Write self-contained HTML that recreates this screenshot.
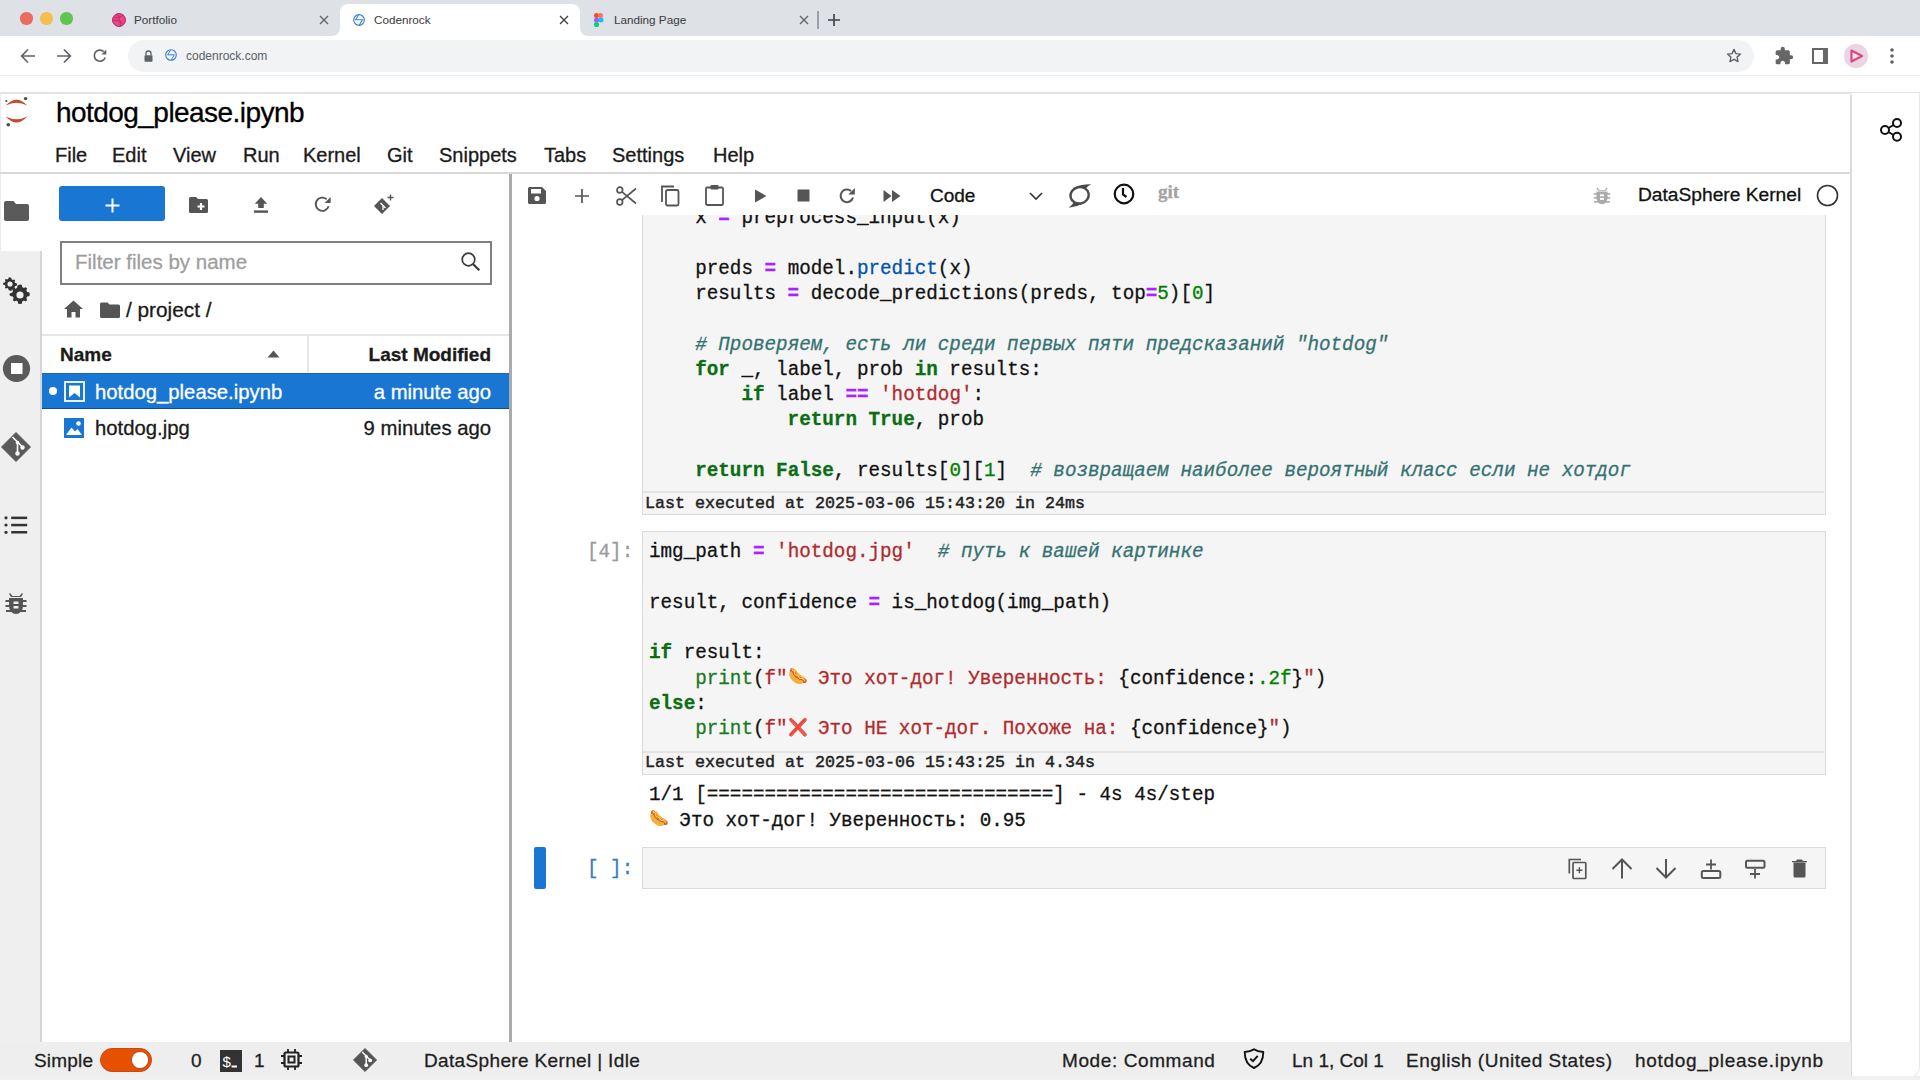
<!DOCTYPE html>
<html><head><meta charset="utf-8">
<style>
*{box-sizing:border-box;margin:0;padding:0}
html,body{width:1920px;height:1080px;overflow:hidden;background:#fff;font-family:"Liberation Sans",sans-serif;color:#000;-webkit-text-stroke:0.3px currentColor}
.a{position:absolute}
svg{position:absolute;overflow:visible}
.tabtxt{top:13px;font-size:11.7px;line-height:14px;color:#3c4043;white-space:nowrap;-webkit-text-stroke:0.05px currentColor}
.menu{top:144px;font-size:20px;line-height:23px;color:#1a1a1a;white-space:nowrap}
.st{top:1048.7px;font-size:19px;line-height:23px;color:#1e1e1e;white-space:nowrap}
.code{font-family:"Liberation Mono",monospace;font-size:20.5px;white-space:pre;color:#111;line-height:25.25px;transform:scaleX(0.939);transform-origin:0 0;-webkit-text-stroke:0.3px currentColor}
.exe{font-family:"Liberation Mono",monospace;font-size:17.4px;white-space:pre;color:#222;line-height:20px;transform:scaleX(0.958);transform-origin:0 0;-webkit-text-stroke:0.45px currentColor}
.k{color:#0b6e12;font-weight:bold}
.o{color:#aa22ff;font-weight:bold}
.s{color:#b02a2e}
.c{color:#357272;font-style:italic}
.n{color:#008000}
.b{color:#1a7a22}
.p{color:#0055aa}
.emo{display:inline-block;width:20px;font-size:17px;line-height:20px;text-align:left;overflow:visible;position:relative;top:-1.5px;-webkit-text-stroke:0}
</style></head><body>
<!-- ============ BROWSER CHROME ============ -->
<div class="a" style="left:0;top:0;width:1920px;height:36px;background:#dee1e6"></div>
<div class="a" style="left:20px;top:12px;width:12.5px;height:12.5px;border-radius:50%;background:#ed6a5e"></div>
<div class="a" style="left:40px;top:12px;width:12.5px;height:12.5px;border-radius:50%;background:#f4bf4f"></div>
<div class="a" style="left:60px;top:12px;width:12.5px;height:12.5px;border-radius:50%;background:#61c554"></div>
<!-- active tab -->
<div class="a" style="left:340px;top:4px;width:240px;height:32px;background:#fff;border-radius:8px 8px 0 0"></div>
<div class="a" style="left:332px;top:28px;width:8px;height:8px;background:#fff"></div>
<div class="a" style="left:324px;top:20px;width:16px;height:16px;background:#dee1e6;border-radius:0 0 8px 0"></div>
<div class="a" style="left:580px;top:28px;width:8px;height:8px;background:#fff"></div>
<div class="a" style="left:580px;top:20px;width:16px;height:16px;background:#dee1e6;border-radius:0 0 0 8px"></div>
<!-- tab 1 favicon (dribbble) -->
<svg style="left:112px;top:13px" width="14" height="14" viewBox="0 0 14 14"><circle cx="7" cy="7" r="6.5" fill="#e64683" stroke="#b8296a" stroke-width="1"/><path d="M2 4.5c3 0.5 7-0.5 9.5-2.5M1 8c3-1.5 7-1 10 3M5 1c2 3 3.5 7 3.5 12" stroke="#c32361" stroke-width="0.8" fill="none"/></svg>
<div class="a tabtxt" style="left:134px">Portfolio</div>
<svg style="left:319px;top:15px" width="10" height="10" viewBox="0 0 10 10"><path d="M1 1L9 9M9 1L1 9" stroke="#5f6368" stroke-width="1.3"/></svg>
<!-- tab 2 favicon -->
<svg style="left:353px;top:14px" width="12" height="12" viewBox="0 0 12 12"><circle cx="6" cy="6" r="5.3" stroke="#3b82d6" stroke-width="1.2" fill="none"/><path d="M5.7 0.8L2.6 5.8H9.4L6.1 11.2" stroke="#3b82d6" stroke-width="1.1" fill="none"/></svg>
<div class="a tabtxt" style="left:374px">Codenrock</div>
<svg style="left:559px;top:15px" width="10" height="10" viewBox="0 0 10 10"><path d="M1 1L9 9M9 1L1 9" stroke="#3c4043" stroke-width="1.3"/></svg>
<!-- tab 3 favicon figma -->
<svg style="left:594px;top:13px" width="10" height="15" viewBox="0 0 10 15"><rect x="0" y="0" width="5" height="5" rx="2.5" fill="#f24e1e"/><rect x="4" y="0" width="5" height="5" rx="2.5" fill="#ff7262"/><rect x="0" y="4.5" width="5" height="5" rx="2.5" fill="#a259ff"/><circle cx="7" cy="7" r="2.5" fill="#1abcfe"/><circle cx="2.5" cy="11.5" r="2.6" fill="#0acf83"/></svg>
<div class="a tabtxt" style="left:614px">Landing Page</div>
<svg style="left:799px;top:15px" width="10" height="10" viewBox="0 0 10 10"><path d="M1 1L9 9M9 1L1 9" stroke="#5f6368" stroke-width="1.3"/></svg>
<div class="a" style="left:817px;top:11px;width:1.5px;height:18px;background:#9aa0a6"></div>
<svg style="left:827px;top:13px" width="14" height="14" viewBox="0 0 14 14"><path d="M7 1V13M1 7H13" stroke="#3c4043" stroke-width="1.6"/></svg>

<!-- toolbar row -->
<div class="a" style="left:0;top:75px;width:1920px;height:1px;background:#ececec"></div>
<svg style="left:20px;top:48px" width="16" height="16" viewBox="0 0 16 16"><path d="M15 8H2M8 1.5L1.6 8L8 14.5" stroke="#5f6368" stroke-width="1.7" fill="none"/></svg>
<svg style="left:56px;top:48px" width="16" height="16" viewBox="0 0 16 16"><path d="M1 8H14M8 1.5L14.4 8L8 14.5" stroke="#5f6368" stroke-width="1.7" fill="none"/></svg>
<svg style="left:92px;top:48px" width="16" height="16" viewBox="0 0 16 16"><path d="M13.2 9.5A5.6 5.6 0 1 1 11.8 3.6" stroke="#5f6368" stroke-width="1.7" fill="none"/><path d="M14.3 1.5V6.4H9.4Z" fill="#5f6368"/></svg>
<div class="a" style="left:128px;top:40px;width:1626px;height:32px;border-radius:16px;background:#f1f3f4"></div>
<svg style="left:144px;top:50px" width="9" height="12" viewBox="0 0 9 12"><path d="M2 5.5V3.5A2.5 2.5 0 0 1 7 3.5V5.5" stroke="#5f6368" stroke-width="1.3" fill="none"/><rect x="0.5" y="5.2" width="8" height="6.5" rx="0.8" fill="#5f6368"/></svg>
<svg style="left:165px;top:49px" width="12" height="12" viewBox="0 0 12 12"><circle cx="6" cy="6" r="5.3" stroke="#3b82d6" stroke-width="1.1" fill="none"/><path d="M5.7 0.8L2.6 5.8H9.4L6.1 11.2" stroke="#3b82d6" stroke-width="1" fill="none"/></svg>
<div class="a" style="left:186px;top:49px;font-size:12px;line-height:14px;color:#5f6368;-webkit-text-stroke:0.05px currentColor">codenrock.com</div>
<svg style="left:1725px;top:47px" width="18" height="18" viewBox="0 0 24 24"><path d="M12 3.2l2.6 5.6 6.1.6-4.6 4.1 1.3 6-5.4-3.1-5.4 3.1 1.3-6-4.6-4.1 6.1-.6z" stroke="#5f6368" stroke-width="1.8" fill="none" stroke-linejoin="round"/></svg>
<svg style="left:1774px;top:46px" width="20" height="20" viewBox="0 0 24 24"><path d="M20.5 11H19V7c0-1.1-.9-2-2-2h-4V3.5a2.5 2.5 0 0 0-5 0V5H4c-1.1 0-2 .9-2 2v3.8h1.5c1.5 0 2.7 1.2 2.7 2.7S5 16.2 3.5 16.2H2V20c0 1.1.9 2 2 2h3.8v-1.5c0-1.5 1.2-2.7 2.7-2.7s2.7 1.2 2.7 2.7V22H17c1.1 0 2-.9 2-2v-4h1.5a2.5 2.5 0 0 0 0-5z" fill="#666"/></svg>
<svg style="left:1812px;top:48px" width="16" height="16" viewBox="0 0 16 16"><rect x="1" y="1" width="14" height="14" stroke="#666" stroke-width="2" fill="none"/><rect x="11" y="1" width="4" height="14" fill="#666"/></svg>
<div class="a" style="left:1844px;top:44px;width:24px;height:24px;border-radius:50%;background:#ead3e2"></div>
<svg style="left:1848px;top:48px" width="16" height="16" viewBox="0 0 16 16"><path d="M3.5 2.5L14 8L3.5 13.5Z" fill="#f6e6f0" stroke="#d9487e" stroke-width="2.2" stroke-linejoin="round"/></svg>
<svg style="left:1889px;top:47px" width="6" height="18" viewBox="0 0 6 18"><circle cx="3" cy="3" r="1.8" fill="#5f6368"/><circle cx="3" cy="9" r="1.8" fill="#5f6368"/><circle cx="3" cy="15" r="1.8" fill="#5f6368"/></svg>

<!-- ============ JUPYTER ============ -->
<div class="a" style="left:0;top:92px;width:1920px;height:1.5px;background:#e3e3e3"></div>
<div class="a" style="left:0;top:93px;width:1px;height:987px;background:#ececec"></div>
<!-- logo -->
<svg style="left:0;top:93px" width="32" height="36" viewBox="0 0 32 36"><path d="M5.8 12.5Q16.5 1.2 27.2 12.5Q16.5 7.2 5.8 12.5Z" fill="#c9472c"/><path d="M5.8 23.5Q16.5 35.5 27.2 23.5Q16.5 29.2 5.8 23.5Z" fill="#c9472c"/><circle cx="25.6" cy="5.6" r="1.7" fill="#4a4a4a"/><circle cx="6.3" cy="8" r="1.1" fill="#4a4a4a"/><circle cx="8.3" cy="31.8" r="1.8" fill="#4a4a4a"/></svg>
<div class="a" style="left:56px;top:96.8px;font-size:28px;line-height:32px;letter-spacing:-0.55px;color:#000;white-space:nowrap">hotdog_please.ipynb</div>
<div class="a menu" style="left:55px">File</div>
<div class="a menu" style="left:112px">Edit</div>
<div class="a menu" style="left:173px">View</div>
<div class="a menu" style="left:243px">Run</div>
<div class="a menu" style="left:303px">Kernel</div>
<div class="a menu" style="left:387px">Git</div>
<div class="a menu" style="left:439px">Snippets</div>
<div class="a menu" style="left:544px">Tabs</div>
<div class="a menu" style="left:612px">Settings</div>
<div class="a menu" style="left:713px">Help</div>
<div class="a" style="left:0;top:172px;width:1852px;height:2px;background:#d9d9d9"></div>

<!-- right sidebar -->
<div class="a" style="left:1852px;top:93px;width:68px;height:984.5px;background:#fff;border-bottom-right-radius:11px;border-right:1px solid #e9e9e9;border-bottom:1px solid #e9e9e9"></div>
<div class="a" style="left:1850px;top:95px;width:2px;height:985px;background:#dcdcdc"></div>
<svg style="left:1879px;top:117px" width="24" height="26" viewBox="0 0 24 26"><circle cx="6" cy="13" r="4" stroke="#111" stroke-width="2" fill="none"/><circle cx="18" cy="6" r="4" stroke="#111" stroke-width="2" fill="none"/><circle cx="18" cy="19.7" r="4" stroke="#111" stroke-width="2" fill="none"/><path d="M9.5 11L14.5 8M9.5 15L14.5 18" stroke="#111" stroke-width="2"/></svg>

<!-- left strip -->
<div class="a" style="left:0;top:251px;width:41px;height:791px;background:#efefef"></div>
<div class="a" style="left:39.5px;top:251px;width:2px;height:791px;background:#d5d5d5"></div>

<svg style="left:4px;top:201px" width="25" height="20" viewBox="0 0 25 20"><path d="M2 0H9.5L12 3H23A2 2 0 0 1 25 5V18A2 2 0 0 1 23 20H2A2 2 0 0 1 0 18V2A2 2 0 0 1 2 0Z" fill="#5a5a5a"/></svg>
<svg style="left:3px;top:276px" width="27" height="27" viewBox="0 0 27 27">
<g fill="#333"><path d="M7 1.5l1.3.3.3 1.5 1.2.7 1.4-.6.9.9-.6 1.4.7 1.2 1.5.3.3 1.3-.3 1.3-1.5.3-.7 1.2.6 1.4-.9.9-1.4-.6-1.2.7-.3 1.5L7 14.5l-1.3-.3-.3-1.5-1.2-.7-1.4.6-.9-.9.6-1.4-.7-1.2-1.5-.3L0 8l.3-1.3 1.5-.3.7-1.2-.6-1.4.9-.9 1.4.6 1.2-.7.3-1.5z"/><path d="M17 8.5l1.8.4.4 2.1 1.6 1 2-.8 1.3 1.3-.8 2 1 1.6 2.1.4.4 1.8-.4 1.8-2.1.4-1 1.6.8 2-1.3 1.3-2-.8-1.6 1-.4 2.1-1.8.4-1.8-.4-.4-2.1-1.6-1-2 .8-1.3-1.3.8-2-1-1.6-2.1-.4L6.5 19l.4-1.8 2.1-.4 1-1.6-.8-2 1.3-1.3 2 .8 1.6-1 .4-2.1z"/></g>
<circle cx="7" cy="8" r="2.6" fill="#eee"/><circle cx="17" cy="19" r="3.6" fill="#eee"/></svg>
<svg style="left:2px;top:354px" width="29" height="29" viewBox="0 0 29 29"><circle cx="14.5" cy="14.5" r="13.6" fill="#5a5a5a"/><rect x="9" y="9" width="11.5" height="11" fill="#fff"/></svg>
<svg style="left:1px;top:432px" width="30" height="30" viewBox="0 0 30 30"><path d="M15 0.5L29.5 15L15 29.5L0.5 15Z" fill="#5a5a5a" stroke="#5a5a5a" stroke-width="1" stroke-linejoin="round"/><path d="M11.5 5L16.5 10V21M16.5 10L21.5 15" stroke="#fff" stroke-width="1.6" fill="none"/><circle cx="16.5" cy="21.5" r="2.2" fill="#fff"/><circle cx="21.5" cy="15.5" r="2.2" fill="#fff"/><circle cx="16.5" cy="10.5" r="1.8" fill="#fff"/></svg>
<svg style="left:4px;top:515px" width="24" height="20" viewBox="0 0 24 20"><g fill="#333"><circle cx="2" cy="2.8" r="1.6"/><circle cx="2" cy="10" r="1.6"/><circle cx="2" cy="17.3" r="1.6"/><rect x="7.2" y="1.6" width="16" height="2.5"/><rect x="7.2" y="8.8" width="16" height="2.5"/><rect x="7.2" y="16" width="16" height="2.5"/></g></svg>
<svg style="left:5px;top:591px" width="22" height="24" viewBox="0 0 22 24"><g fill="#555"><path d="M5 2L7.5 5H14.5L17 2L18 3L16 6H6L4 3Z"/><rect x="0.5" y="9" width="21" height="2"/><rect x="0.5" y="14" width="21" height="2"/><rect x="1" y="19" width="20" height="2"/><path d="M4 7H18V15A7 8 0 0 1 4 15Z"/></g><rect x="8.5" y="10.5" width="5" height="2.5" fill="#eee"/><rect x="8.5" y="15" width="5" height="2.5" fill="#eee"/></svg>


<!-- file browser -->
<div class="a" style="left:509.3px;top:174px;width:2.4px;height:868px;background:#ababab"></div>

<div class="a" style="left:59px;top:186px;width:106px;height:35px;background:#1976d2;border-radius:3px"></div>
<svg style="left:105px;top:198px" width="15" height="15" viewBox="0 0 15 15"><path d="M7.5 0.5V14.5M0.5 7.5H14.5" stroke="#fff" stroke-width="2"/></svg>
<svg style="left:189px;top:196.5px" width="19" height="16" viewBox="0 0 19 16"><path d="M1.5 0H7L9 2H17.5A1.5 1.5 0 0 1 19 3.5V14.5A1.5 1.5 0 0 1 17.5 16H1.5A1.5 1.5 0 0 1 0 14.5V1.5A1.5 1.5 0 0 1 1.5 0Z" fill="#555"/><path d="M12 6V13M8.5 9.5H15.5" stroke="#fff" stroke-width="2.2"/></svg>
<svg style="left:254px;top:196.5px" width="14" height="16" viewBox="0 0 14 16"><path d="M7 0L13.2 6.8H9.8V11H4.2V6.8H0.8Z" fill="#555"/><rect x="0" y="13.4" width="14" height="2.4" fill="#555"/></svg>
<svg style="left:313px;top:195px" width="19" height="19" viewBox="0 0 19 19"><path d="M15.6 11.2A6.6 6.6 0 1 1 13.6 4.2" stroke="#555" stroke-width="1.9" fill="none"/><path d="M17.6 2V8H11.6Z" fill="#555"/></svg>
<svg style="left:373px;top:194px" width="22" height="22" viewBox="0 0 22 22"><path d="M9 4L17 12L9 20L1 12Z" fill="#555"/><path d="M7.5 9L10 11.5V16M10 11.5L12.5 14" stroke="#fff" stroke-width="1.3" fill="none"/><path d="M17.5 0.5V6.5M14.5 3.5H20.5" stroke="#555" stroke-width="1.4"/></svg>
<div class="a" style="left:59.5px;top:240.5px;width:432px;height:44px;border:2px solid #7f7f7f;background:#fff"></div>
<div class="a" style="left:75px;top:250px;font-size:20.5px;line-height:24px;color:#9e9e9e;white-space:nowrap">Filter files by name</div>
<svg style="left:460px;top:251px" width="22" height="22" viewBox="0 0 22 22"><circle cx="8.5" cy="8.5" r="6.3" stroke="#3a3a3a" stroke-width="1.7" fill="none"/><path d="M13.2 13.2L19.3 19.3" stroke="#3a3a3a" stroke-width="2.3"/></svg>
<svg style="left:64px;top:300px" width="19" height="18" viewBox="0 0 19 18"><path d="M9.5 0.5L19 9H16V17.5H11.5V12H7.5V17.5H3V9H0Z" fill="#555"/></svg>
<svg style="left:100px;top:302px" width="20" height="16" viewBox="0 0 20 16"><path d="M1.5 0.5H7.5L9.5 2.5H18.5A1.5 1.5 0 0 1 20 4V14.5A1.5 1.5 0 0 1 18.5 16H1.5A1.5 1.5 0 0 1 0 14.5V2A1.5 1.5 0 0 1 1.5 0.5Z" fill="#555"/></svg>
<div class="a" style="left:126px;top:298px;font-size:20.8px;line-height:23px;color:#1a1a1a;white-space:nowrap">/ project /</div>
<div class="a" style="left:42px;top:334px;width:467px;height:1.5px;background:#e6e6e6"></div>
<div class="a" style="left:307px;top:336px;width:1.5px;height:36px;background:#e6e6e6"></div>
<div class="a" style="left:60px;top:344px;font-size:19px;line-height:22px;font-weight:bold;color:#1a1a1a;white-space:nowrap">Name</div>
<svg style="left:267px;top:350px" width="13" height="8" viewBox="0 0 13 8"><path d="M6.5 0.5L12.5 7.5H0.5Z" fill="#555"/></svg>
<div class="a" style="left:300px;top:344px;width:191px;text-align:right;font-size:19px;line-height:22px;font-weight:bold;color:#1a1a1a;white-space:nowrap">Last Modified</div>
<div class="a" style="left:42px;top:372.5px;width:467px;height:36.5px;background:#1976d2;border-top:1px solid #1b66b8;border-bottom:1.5px solid #0e4f93"></div>
<div class="a" style="left:49px;top:387px;width:8px;height:8px;border-radius:50%;background:#fff"></div>
<svg style="left:64px;top:381px" width="21" height="21" viewBox="0 0 21 21"><rect x="1" y="1" width="19" height="19" stroke="#fff" stroke-width="1.8" fill="none"/><path d="M5 4.5H16V16.5L10.5 12L5 16.5Z" fill="#fff"/></svg>
<div class="a" style="left:95px;top:381px;font-size:20.3px;line-height:23px;color:#fff;white-space:nowrap">hotdog_please.ipynb</div>
<div class="a" style="left:300px;top:381px;width:191px;text-align:right;font-size:20.3px;line-height:23px;color:#fff;white-space:nowrap">a minute ago</div>
<svg style="left:64px;top:418px" width="20" height="20" viewBox="0 0 20 20"><rect x="0" y="0" width="20" height="20" fill="#1976d2"/><path d="M2 17L7.5 9.5L11 13.5L13.5 11L18 17Z" fill="#fff"/><circle cx="14.5" cy="5.5" r="2.3" fill="#fff"/></svg>
<div class="a" style="left:95px;top:417px;font-size:20.3px;line-height:23px;color:#1a1a1a;white-space:nowrap">hotdog.jpg</div>
<div class="a" style="left:300px;top:417px;width:191px;text-align:right;font-size:20.3px;line-height:23px;color:#1a1a1a;white-space:nowrap">9 minutes ago</div>


<!-- notebook -->

<!-- toolbar icons -->
<svg style="left:528px;top:187px" width="18" height="17" viewBox="0 0 18 17"><path d="M1.5 0H14L18 4V15.5A1.5 1.5 0 0 1 16.5 17H1.5A1.5 1.5 0 0 1 0 15.5V1.5A1.5 1.5 0 0 1 1.5 0Z" fill="#555"/><rect x="3" y="2" width="10" height="4.5" fill="#fff"/><circle cx="9" cy="11.5" r="2.6" fill="#fff"/></svg>
<svg style="left:575px;top:189px" width="14" height="14" viewBox="0 0 14 14"><path d="M7 0V14M0 7H14" stroke="#555" stroke-width="1.7"/></svg>
<svg style="left:616px;top:186px" width="21" height="20" viewBox="0 0 21 20"><circle cx="3.8" cy="4" r="2.8" stroke="#555" stroke-width="1.7" fill="none"/><circle cx="3.8" cy="16" r="2.8" stroke="#555" stroke-width="1.7" fill="none"/><path d="M6 5.8L20 17.5M6 14.2L20 2.5" stroke="#555" stroke-width="1.7"/></svg>
<svg style="left:661px;top:185px" width="19" height="22" viewBox="0 0 19 22"><path d="M1 17V1.5H13" stroke="#555" stroke-width="1.8" fill="none"/><rect x="5" y="5" width="12.5" height="15.5" rx="1.5" stroke="#555" stroke-width="1.8" fill="none"/></svg>
<svg style="left:705px;top:184px" width="19" height="22" viewBox="0 0 19 22"><rect x="1" y="3.5" width="17" height="17.5" rx="1.2" stroke="#555" stroke-width="1.8" fill="none"/><rect x="5.5" y="1" width="8" height="4.5" rx="1" fill="#555"/></svg>
<svg style="left:754px;top:189px" width="13" height="14" viewBox="0 0 13 14"><path d="M1 0.5L12.5 7L1 13.5Z" fill="#555"/></svg>
<svg style="left:797px;top:189px" width="13" height="13" viewBox="0 0 13 13"><rect x="0.5" y="0.5" width="12" height="12" fill="#555"/></svg>
<svg style="left:838px;top:187px" width="18" height="18" viewBox="0 0 18 18"><path d="M15 10.5A6.3 6.3 0 1 1 13 4" stroke="#555" stroke-width="2" fill="none"/><path d="M16.8 1V7.5H10.3Z" fill="#555"/></svg>
<svg style="left:883px;top:189px" width="18" height="14" viewBox="0 0 18 14"><path d="M0.5 1L8.5 7L0.5 13ZM9 1L17.5 7L9 13Z" fill="#555"/></svg>
<div class="a" style="left:930px;top:185px;font-size:19px;line-height:22px;color:#111;white-space:nowrap">Code</div>
<svg style="left:1029px;top:192px" width="14" height="9" viewBox="0 0 14 9"><path d="M1 1L7 7L13 1" stroke="#333" stroke-width="1.6" fill="none"/></svg>
<svg style="left:1066px;top:182px" width="28" height="28" viewBox="0 0 28 28"><ellipse cx="13.6" cy="13.3" rx="9.2" ry="8.2" transform="rotate(-12 13.6 13.3)" stroke="#4a4a4a" stroke-width="2.4" fill="none"/><path d="M9 5.6Q16 2 25 2.3Q21 4.5 19.5 6.8Q15 4.6 9 5.6Z" fill="#4a4a4a"/><path d="M18.5 21Q11 25 2.6 25.8Q6 23.5 7.5 20.5Q12 22.5 18.5 21Z" fill="#4a4a4a"/></svg>
<svg style="left:1113px;top:183px" width="22" height="22" viewBox="0 0 22 22"><circle cx="11" cy="11" r="9.3" stroke="#111" stroke-width="2.2" fill="none"/><path d="M10 5V11.5L13.5 14" stroke="#111" stroke-width="2.2" fill="none"/></svg>
<div class="a" style="left:1158px;top:181px;font-family:'Liberation Serif',serif;font-size:19px;font-weight:bold;line-height:22px;color:#a3a3a3;white-space:nowrap">git</div>
<svg style="left:1593px;top:186px" width="18" height="19" viewBox="0 0 22 24"><g fill="#aaa"><path d="M5 2L7.5 5H14.5L17 2L18 3L16 6H6L4 3Z"/><rect x="0.5" y="9" width="21" height="2"/><rect x="0.5" y="14" width="21" height="2"/><rect x="1" y="19" width="20" height="2"/><path d="M4 7H18V15A7 8 0 0 1 4 15Z"/></g><rect x="8.5" y="10.5" width="5" height="2.5" fill="#fff"/><rect x="8.5" y="15" width="5" height="2.5" fill="#fff"/></svg>
<div class="a" style="left:1638px;top:184px;font-size:19.2px;line-height:22px;color:#111;white-space:nowrap">DataSphere Kernel</div>
<svg style="left:1816px;top:184px" width="23" height="23" viewBox="0 0 23 23"><circle cx="11.5" cy="11.5" r="10" stroke="#333" stroke-width="1.6" fill="none"/></svg>

<!-- notebook scroll area -->
<div class="a" style="left:512px;top:215px;width:1338px;height:827px;overflow:hidden">
<div class="a" style="left:-512px;top:-215px;width:1920px;height:1080px">
<!-- cell 1 -->
<div class="a" style="left:642px;top:150px;width:1184px;height:365px;background:#f5f5f5;border:1px solid #dadada;border-top:none"></div>
<div class="a" style="left:643px;top:491px;width:1181px;height:1.5px;background:#e3e3e3"></div>
<div class="a code" style="left:649px;top:205.3px">    x <span class="o">=</span> preprocess_input(x)

    preds <span class="o">=</span> model<span class="o"></span>.<span class="p">predict</span>(x)
    results <span class="o">=</span> decode_predictions(preds, top<span class="o">=</span><span class="n">5</span>)[<span class="n">0</span>]

    <span class="c"># Проверяем, есть ли среди первых пяти предсказаний "hotdog"</span>
    <span class="k">for</span> _, label, prob <span class="k">in</span> results:
        <span class="k">if</span> label <span class="o">==</span> <span class="s">'hotdog'</span>:
            <span class="k">return</span> <span class="k">True</span>, prob

    <span class="k">return</span> <span class="k">False</span>, results[<span class="n">0</span>][<span class="n">1</span>]  <span class="c"># возвращаем наиболее вероятный класс если не хотдог</span></div>
<div class="a exe" style="left:645px;top:493.5px">Last executed at 2025-03-06 15:43:20 in 24ms</div>

<!-- cell 2 -->
<div class="a code" style="left:587px;top:539.3px;color:#999">[4]:</div>
<div class="a" style="left:642px;top:530.5px;width:1184px;height:244px;background:#f5f5f5;border:1px solid #dadada"></div>
<div class="a" style="left:643px;top:751px;width:1181px;height:1.5px;background:#e3e3e3"></div>
<div class="a code" style="left:649px;top:539.3px">img_path <span class="o">=</span> <span class="s">'hotdog.jpg'</span>  <span class="c"># путь к вашей картинке</span>

result, confidence <span class="o">=</span> is_hotdog(img_path)

<span class="k">if</span> result:
    <span class="b">print</span>(<span class="s">f"</span><span class="emo">🌭</span><span class="s"> Это хот-дог! Уверенность: </span>{confidence:<span class="n">.2f</span>}<span class="s">"</span>)
<span class="k">else</span>:
    <span class="b">print</span>(<span class="s">f"</span><span class="emo x">❌</span><span class="s"> Это НЕ хот-дог. Похоже на: </span>{confidence}<span class="s">"</span>)</div>
<div class="a exe" style="left:645px;top:753px">Last executed at 2025-03-06 15:43:25 in 4.34s</div>
<!-- output -->
<div class="a code" style="left:649px;top:782.3px">1/1 [==============================] - 4s 4s/step
<span class="emo">🌭</span> Это хот-дог! Уверенность: 0.95</div>

<!-- cell 3 -->
<div class="a" style="left:534px;top:847px;width:12px;height:42px;background:#1976d2;border-radius:2px"></div>
<div class="a code" style="left:587px;top:855.5px;color:#307fc1">[ ]:</div>
<div class="a" style="left:642px;top:847px;width:1184px;height:42px;background:#f5f5f5;border:1px solid #dadada"></div>

<svg style="left:1567px;top:858px" width="21" height="22" viewBox="0 0 21 22"><path d="M2.3 15.5V1.5H14" stroke="#555" stroke-width="1.7" fill="none"/><rect x="6" y="4.5" width="12.8" height="16" rx="1" stroke="#555" stroke-width="1.7" fill="none"/><path d="M12.4 9.3V15.3M9.4 12.3H15.4" stroke="#555" stroke-width="1.4"/></svg>
<svg style="left:1611px;top:858px" width="22" height="22" viewBox="0 0 22 22"><path d="M11 1.5V20.5M1.5 11L11 1.5L20.5 11" stroke="#555" stroke-width="2" fill="none"/></svg>
<svg style="left:1655px;top:858px" width="22" height="22" viewBox="0 0 22 22"><path d="M11 1V19.5M1.5 10L11 19.5L20.5 10" stroke="#555" stroke-width="2" fill="none"/></svg>
<svg style="left:1700px;top:858px" width="22" height="22" viewBox="0 0 22 22"><path d="M11 1.5V11.5M6 6.5H16" stroke="#555" stroke-width="1.8"/><rect x="1.8" y="13" width="18.5" height="7" rx="1.5" stroke="#555" stroke-width="2" fill="none"/></svg>
<svg style="left:1744px;top:858px" width="22" height="22" viewBox="0 0 22 22"><rect x="2" y="2.8" width="18.5" height="7" rx="1.5" stroke="#555" stroke-width="2" fill="none"/><path d="M11 11V20.5M6 16H16" stroke="#555" stroke-width="1.8"/></svg>
<svg style="left:1792px;top:859px" width="15" height="19" viewBox="0 0 15 19"><path d="M5 0.5H10L11 2H15V3.2H0V2H4Z" fill="#555"/><path d="M1.5 3.5H13.5V17A1.5 1.5 0 0 1 12 18.5H3A1.5 1.5 0 0 1 1.5 17Z" fill="#555"/></svg>

</div></div>


<!-- status bar -->
<div class="a" style="left:0;top:1042px;width:1851px;height:34px;background:#eeeeee"></div>
<div class="a" style="left:0;top:1076px;width:1920px;height:4px;background:#f0f0f0"></div>

<div class="a st" style="left:34px;letter-spacing:0.2px">Simple</div>
<div class="a" style="left:100px;top:1047.5px;width:52px;height:24px;border-radius:12px;background:#e65100;border:1.2px solid #c9481a"></div>
<div class="a" style="left:132.3px;top:1052px;width:15.5px;height:15.5px;border-radius:50%;background:#fff;box-shadow:0 0 0 1px #c9481a"></div>
<div class="a st" style="left:191px">0</div>
<svg style="left:220px;top:1050px" width="22" height="22" viewBox="0 0 22 22"><rect x="0" y="0" width="22" height="22" fill="#333"/><text x="2.5" y="17" font-family="Liberation Sans" font-size="15" fill="#fff">$</text><rect x="11.5" y="15.5" width="5.5" height="2" fill="#fff"/></svg>
<div class="a st" style="left:254px">1</div>
<svg style="left:281px;top:1049px" width="21" height="21" viewBox="0 0 21 21"><rect x="3.5" y="3.5" width="14" height="14" rx="1.5" stroke="#222" stroke-width="2.2" fill="none"/><rect x="7.5" y="7.5" width="6" height="6" stroke="#222" stroke-width="2" fill="none"/><path d="M7 0V3.5M14 0V3.5M7 17.5V21M14 17.5V21M0 7H3.5M0 14H3.5M17.5 7H21M17.5 14H21" stroke="#222" stroke-width="1.8"/></svg>
<svg style="left:353px;top:1048px" width="24" height="24" viewBox="0 0 30 30"><path d="M15 0.5L29.5 15L15 29.5L0.5 15Z" fill="#555" stroke="#555" stroke-width="1" stroke-linejoin="round"/><path d="M11.5 5L16.5 10V21M16.5 10L21.5 15" stroke="#fff" stroke-width="1.8" fill="none"/><circle cx="16.5" cy="21.5" r="2.4" fill="#fff"/><circle cx="21.5" cy="15.5" r="2.4" fill="#fff"/><circle cx="16.5" cy="10.5" r="2" fill="#fff"/></svg>
<div class="a st" style="left:424px;letter-spacing:0.35px">DataSphere Kernel | Idle</div>
<div class="a st" style="left:1062px;letter-spacing:0.6px">Mode: Command</div>
<svg style="left:1243px;top:1048px" width="22" height="21" viewBox="0 0 22 21"><path d="M11 1.2C13.5 3 16.5 3.8 20.3 4C20.3 12 17 17.5 11 20C5 17.5 1.7 12 1.7 4C5.5 3.8 8.5 3 11 1.2Z" stroke="#111" stroke-width="1.9" fill="none" stroke-linejoin="round"/><path d="M7.2 10.7L10 13.2L14.7 7.8" stroke="#111" stroke-width="1.9" fill="none"/></svg>
<div class="a st" style="left:1292px">Ln 1, Col 1</div>
<div class="a st" style="left:1406px;letter-spacing:0.53px">English (United States)</div>
<div class="a st" style="left:1635px;letter-spacing:0.7px">hotdog_please.ipynb</div>

</body></html>
